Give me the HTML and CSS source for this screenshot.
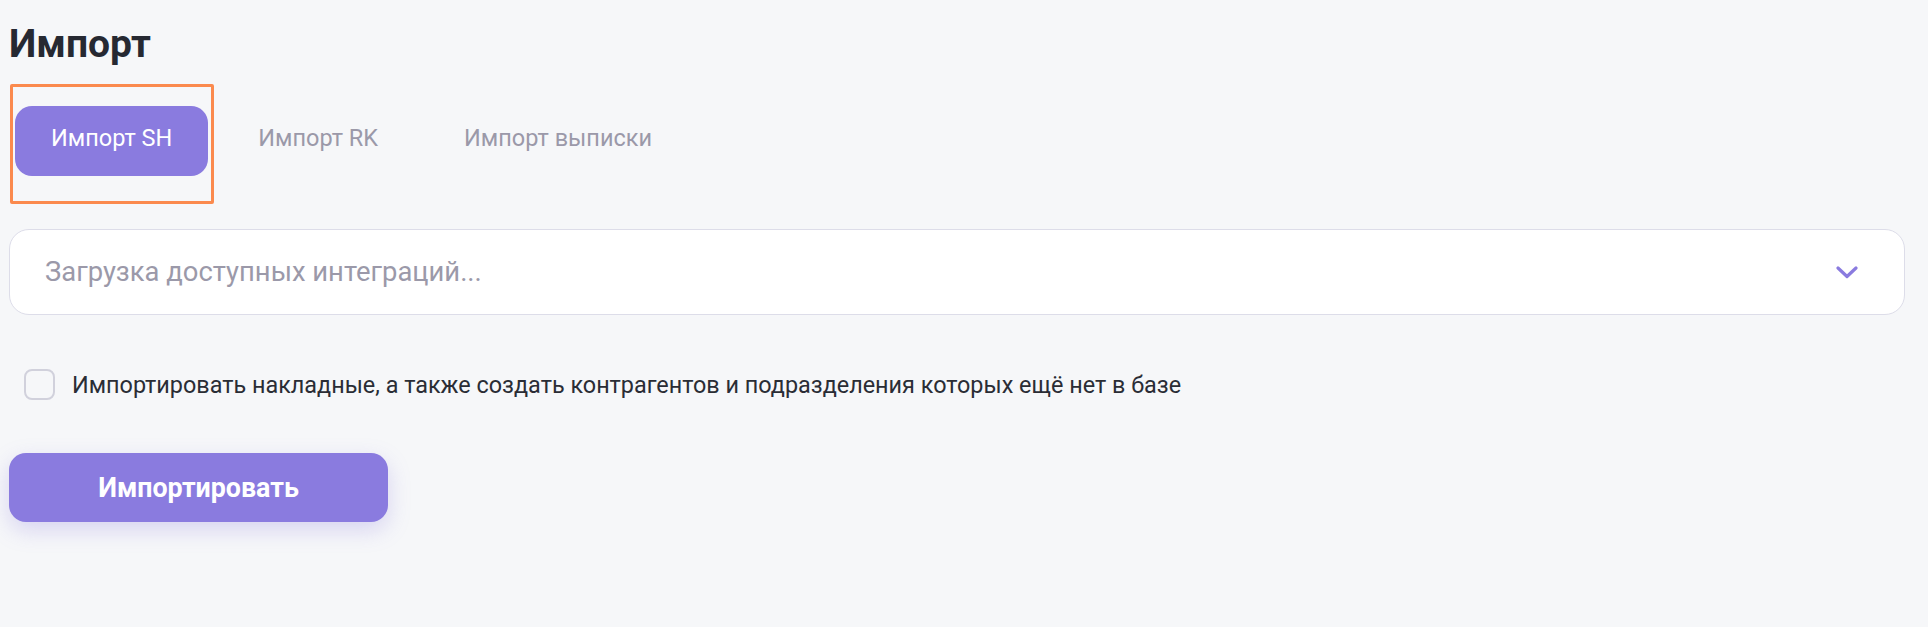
FILE: index.html
```html
<!DOCTYPE html>
<html lang="ru">
<head>
<meta charset="utf-8">
<title>Импорт</title>
<link rel="stylesheet" href="styles.css">
</head>
<body>
<main class="page">
  <h1 class="title">Импорт</h1>
  <nav class="tabs">
    <button class="tab tab--active tab--highlight" type="button">Импорт SH</button>
    <button class="tab" type="button">Импорт RK</button>
    <button class="tab" type="button">Импорт выписки</button>
  </nav>
  <div class="select">
    <span class="select__placeholder">Загрузка доступных интеграций...</span>
    <svg class="select__chevron" width="22" height="13" viewBox="0 0 22 13" aria-hidden="true">
      <path d="M2 2 L11 10.5 L20 2" fill="none" stroke="#8a7bdf" stroke-width="3.2" stroke-linecap="round" stroke-linejoin="round"/>
    </svg>
  </div>
  <label class="check">
    <span class="check__box"></span>
    <span class="check__label">Импортировать накладные, а также создать контрагентов и подразделения которых ещё нет в базе</span>
  </label>
  <button class="submit" type="button">Импортировать</button>
</main>
</body>
</html>
```

FILE: styles.css
```css
html, body {
  margin: 0;
  padding: 0;
  background: #f6f7f9;
}

body {
  font-family: Roboto, "Liberation Sans", Arial, sans-serif;
  color: #2a2d35;
}

.page {
  display: flex;
  flex-direction: column;
  align-items: flex-start;
  padding: 22px 23px 40px 9px;
}

.title {
  margin: 0;
  font-size: 39px;
  line-height: 44px;
  font-weight: 700;
  color: #262932;
}

.tabs {
  display: flex;
  align-items: center;
  gap: 14px;
  margin-top: 40px;
  margin-left: 6px;
}

.tab {
  box-sizing: border-box;
  height: 70px;
  padding: 0 36px 6px;
  border: 0;
  border-radius: 17px;
  background: transparent;
  font-family: inherit;
  font-size: 23.5px;
  font-weight: 400;
  color: #9b99a9;
  cursor: pointer;
}

.tab--active {
  background: #8a7bdf;
  color: #ffffff;
}

.tab--highlight {
  position: relative;
}

.tab--highlight::after {
  content: "";
  position: absolute;
  top: -22px;
  left: -5px;
  right: -6px;
  bottom: -28px;
  border: 3px solid #fb8a4e;
  border-radius: 2px;
  pointer-events: none;
}

.select {
  box-sizing: border-box;
  align-self: stretch;
  display: flex;
  align-items: center;
  justify-content: space-between;
  height: 86px;
  margin-top: 53px;
  padding: 0 46px 0 35px;
  background: #ffffff;
  border: 1px solid #dddde9;
  border-radius: 20px;
}

.select__placeholder {
  font-size: 27.4px;
  color: #9b99a9;
}

.select__chevron {
  display: block;
}

.check {
  display: flex;
  align-items: center;
  gap: 17px;
  margin-top: 54px;
  margin-left: 15px;
  cursor: pointer;
}

.check__box {
  box-sizing: border-box;
  width: 31px;
  height: 31px;
  border: 2.5px solid #d1d1dc;
  border-radius: 8px;
  background: #f6f7f9;
}

.check__label {
  font-size: 23.4px;
  color: #2a2d35;
}

.submit {
  margin-top: 53px;
  width: 379px;
  height: 69px;
  border: 0;
  border-radius: 17px;
  background: #8a7bdf;
  color: #ffffff;
  font-family: inherit;
  font-size: 26.8px;
  font-weight: 700;
  box-shadow: 0 8px 22px rgba(138, 123, 223, 0.28);
  cursor: pointer;
}
```
